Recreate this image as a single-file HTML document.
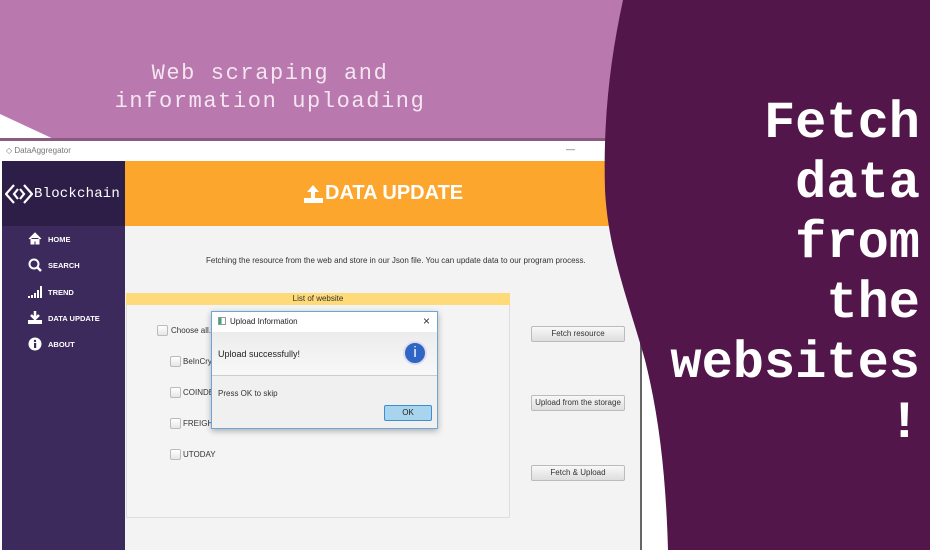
<!DOCTYPE html><html><head><style>
*{margin:0;padding:0;box-sizing:border-box}
body{width:930px;height:550px;overflow:hidden;position:relative;background:#b978ae;font-family:"Liberation Sans",sans-serif}
.abs{position:absolute}
.mono{font-family:"Liberation Mono",monospace}
.s{font-size:8px;color:#333}
.cb{position:absolute;width:11px;height:11px;border:1px solid #bbb;border-radius:2px;background:linear-gradient(#fff,#e6e6e6)}
.btn{position:absolute;left:531px;width:94px;height:16px;border:1px solid #bbb;border-radius:2px;background:linear-gradient(#f8f8f8,#dedede);font-size:8px;color:#333;text-align:center;line-height:14px}
.nav{position:absolute;left:28px;color:#fff;font-size:7.5px;font-weight:bold}
.nav i{position:absolute;left:0;top:-3px;width:14px;height:14px}
.nav span{position:absolute;left:20px;top:0;white-space:nowrap}
</style></head><body>
<svg class="abs" style="left:0;top:110px" width="60" height="32"><polygon points="0,4 58,31 0,31" fill="#fff"/></svg>
<div class="abs mono" style="left:90px;top:60px;width:360px;text-align:center;color:#f4e6f1;font-size:22px;letter-spacing:1.6px;line-height:28px">Web scraping and<br>information uploading</div>
<div class="abs" style="left:0;top:138px;width:668px;height:4px;background:#8a5a80"></div>
<div class="abs" style="left:0;top:141px;width:668px;height:409px;background:#fff"></div>
<div class="abs" style="left:2px;top:141px;width:640px;height:409px;background:#f3f3f3;border-right:2px solid #666"></div>
<div class="abs" style="left:2px;top:141px;width:640px;height:20px;background:#fff"></div>
<div class="abs" style="left:6px;top:146px;font-size:8px;color:#777">&#x25C7; DataAggregator</div>
<div class="abs" style="left:566px;top:144px;font-size:9px;color:#666">—</div>
<div class="abs" style="left:2px;top:161px;width:123px;height:389px;background:#3d2a5d"></div>
<div class="abs" style="left:2px;top:161px;width:123px;height:65px;background:#2d1e48"></div>
<svg class="abs" style="left:5px;top:183px" width="28" height="22" viewBox="0 0 28 22"><path d="M9 2 L1 11 L9 20 M13 6 L9 11 L13 16 M19 2 L27 11 L19 20 M15 6 L19 11 L15 16" stroke="#fff" stroke-width="2.2" fill="none"/></svg>
<div class="abs mono" style="left:34px;top:186px;color:#fff;font-size:14px;letter-spacing:0.2px">Blockchain</div>
<div class="nav" style="top:235px"><i><svg width="14" height="13"><path d="M1 7 L7 1 L13 7 M3 6 V12 H6 V9 H8 V12 H11 V6" fill="#fff" stroke="#fff"/></svg></i><span>HOME</span></div>
<div class="nav" style="top:261px"><i><svg width="14" height="14"><circle cx="6" cy="6" r="4.5" stroke="#fff" stroke-width="2" fill="none"/><path d="M9 9 L13 13" stroke="#fff" stroke-width="2.5"/></svg></i><span>SEARCH</span></div>
<div class="nav" style="top:288px"><i><svg width="16" height="14"><rect x="0" y="11" width="2" height="2" fill="#fff"/><rect x="3" y="10" width="2" height="3" fill="#fff"/><rect x="6" y="8" width="2" height="5" fill="#fff"/><rect x="9" y="5" width="2" height="8" fill="#fff"/><rect x="12" y="1" width="2" height="12" fill="#fff"/></svg></i><span>TREND</span></div>
<div class="nav" style="top:314px"><i><svg width="14" height="14"><path d="M7 0 V7 M3 4 L7 8 L11 4" stroke="#fff" stroke-width="2.5" fill="none"/><rect x="0" y="9" width="14" height="4" fill="#fff"/></svg></i><span>DATA UPDATE</span></div>
<div class="nav" style="top:340px"><i><svg width="14" height="14"><circle cx="7" cy="7" r="6.5" fill="#fff"/><rect x="6" y="6" width="2.2" height="5" fill="#3d2a5d"/><circle cx="7" cy="4" r="1.2" fill="#3d2a5d"/></svg></i><span>ABOUT</span></div>
<div class="abs" style="left:125px;top:161px;width:517px;height:65px;background:#fca62e"></div>
<svg class="abs" style="left:304px;top:184px" width="20" height="20"><path d="M9 1 L3 8 H7 V14 H11 V8 H15 Z" fill="#fff"/><rect x="0" y="14" width="19" height="5" fill="#fff"/></svg>
<div class="abs" style="left:325px;top:182px;color:#fff;font-size:20px;font-weight:bold">DATA UPDATE</div>
<div class="abs s" style="left:206px;top:256px">Fetching the resource from the web and store in our Json file. You can update data to our program process.</div>
<div class="abs" style="left:126px;top:293px;width:384px;height:225px;border:1px solid #ddd;background:#f4f4f4"></div>
<div class="abs s" style="left:126px;top:293px;width:384px;height:12px;background:#fedb78;text-align:center;line-height:12px">List of website</div>
<div class="cb" style="left:157px;top:325px"></div><div class="abs s" style="left:171px;top:326px">Choose all.</div>
<div class="cb" style="left:170px;top:356px"></div><div class="abs s" style="left:183px;top:357px">BeInCrypto</div>
<div class="cb" style="left:170px;top:387px"></div><div class="abs s" style="left:183px;top:388px">COINDESK</div>
<div class="cb" style="left:170px;top:418px"></div><div class="abs s" style="left:183px;top:419px">FREIGHT</div>
<div class="cb" style="left:170px;top:449px"></div><div class="abs s" style="left:183px;top:450px">UTODAY</div>
<div class="btn" style="top:326px">Fetch resource</div>
<div class="btn" style="top:395px">Upload from the storage</div>
<div class="btn" style="top:465px">Fetch &amp; Upload</div>
<div class="abs" style="left:211px;top:311px;width:227px;height:118px;border:1px solid #6aa7d8;background:#f0f0f0;box-shadow:0 2px 6px rgba(0,0,0,.3)"></div>
<div class="abs" style="left:212px;top:312px;width:225px;height:20px;background:#fff"></div>
<div class="abs" style="left:218px;top:317px;width:8px;height:8px;border:1px solid #999;background:linear-gradient(90deg,#3a7 40%,#fff 40%)"></div>
<div class="abs" style="left:230px;top:317px;font-size:8px;color:#222">Upload Information</div>
<div class="abs" style="left:423px;top:314px;font-size:12px;color:#333">×</div>
<div class="abs" style="left:212px;top:332px;width:225px;height:44px;background:linear-gradient(#ececec,#f8f8f8);border-bottom:1px solid #ccc"></div>
<div class="abs" style="left:218px;top:349px;font-size:9px;color:#222">Upload successfully!</div>
<div class="abs" style="left:403px;top:341px;width:24px;height:24px;border-radius:50%;background:#2f65c5;border:2px solid #dde;color:#fff;text-align:center;font-size:15px;line-height:20px">i</div>
<div class="abs s" style="left:218px;top:389px">Press OK to skip</div>
<div class="abs" style="left:384px;top:405px;width:48px;height:16px;border:1px solid #3c8fd0;border-radius:2px;background:#a9d4ee;font-size:8px;text-align:center;line-height:14px;color:#222">OK</div>
<svg class="abs" style="left:0;top:0" width="930" height="550"><path d="M623 0 C610 60 603 120 605 190 C608 250 628 300 645 360 C660 420 666 480 668 550 L930 550 L930 0 Z" fill="#52164a"/></svg>
<div class="abs mono" style="right:10px;top:94px;text-align:right;color:#fff;font-size:52px;font-weight:bold;line-height:60px">Fetch<br>data<br>from<br>the<br>websites<br>!</div>
</body></html>
